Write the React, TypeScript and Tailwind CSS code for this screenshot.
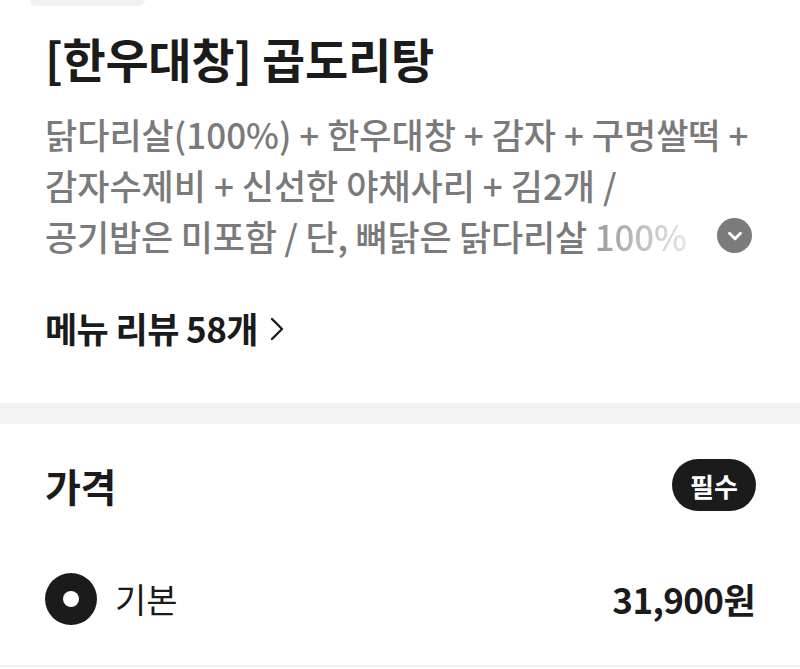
import { ChevronDown } from "lucide-react";

const FONT = "font-['Noto_Sans_CJK_KR','Noto_Sans',sans-serif]";

export default function App() {
  return (
    <div className={`w-[800px] h-[669px] overflow-hidden bg-white text-[#1b1b1b] ${FONT}`}>
      {/* top menu info */}
      <div className="px-[45px]">
        <div className="ml-[-15px] h-[6px] w-[115px] rounded-b-[10px] bg-[#f1f1f2]" />
        <h1 className="mt-[22px] h-[60px] text-[47px] font-bold leading-[60px] tracking-[-0.3px]">[한우대창] 곱도리탕</h1>
        <div className="mt-[20px] text-[35px] font-medium leading-[51px] text-[#7a7a7a]">
          <p className="whitespace-nowrap">닭다리살(100%) + 한우대창 + 감자 + 구멍쌀떡 +</p>
          <p className="whitespace-nowrap">감자수제비 + 신선한 야채사리 + 김2개 /</p>
          <div className="flex items-center">
            <p className="whitespace-nowrap tracking-[-0.2px]">
              공기밥은 미포함 / 단, 뼈닭은 닭다리살{" "}
              <span className="bg-gradient-to-r from-[#9a9a9a] to-[#e6e6e6] bg-clip-text text-transparent">100%</span>
            </p>
            <div className="ml-auto mr-[3px] flex h-[35px] w-[35px] shrink-0 items-center justify-center rounded-full bg-[#7b7b7b]">
              <ChevronDown className="h-[22px] w-[22px] text-white" strokeWidth={3.2} />
            </div>
          </div>
        </div>
        <div className="mt-[47px] flex h-[40px] items-center gap-[12px]">
          <span className="text-[35px] font-bold tracking-[-0.6px]">메뉴 리뷰 58개</span>
          <svg width="14" height="24" viewBox="0 0 14 24" fill="none" className="mt-[2px]">
            <polyline points="2,2 12,12 2,22" stroke="#1b1b1b" strokeWidth="2.4" strokeLinecap="round" strokeLinejoin="round" />
          </svg>
        </div>
      </div>

      <div className="mt-[55px] h-[21px] bg-[#f3f3f5]" />

      {/* price section */}
      <div className="px-[45px]">
        <div className="mt-[32px] flex items-center justify-between">
          <h2 className="text-[39px] font-bold tracking-[-0.5px]">가격</h2>
          <span className="mr-[-1px] flex h-[52px] w-[84px] items-center justify-center rounded-full bg-[#1b1b1b] text-[26px] font-bold text-white">
            필수
          </span>
        </div>
        <div className="mt-[58px] flex items-center">
          <div className="flex h-[52px] w-[52px] items-center justify-center rounded-full bg-[#1b1b1b]">
            <div className="h-[16px] w-[16px] rounded-full bg-white" />
          </div>
          <span className="ml-[18px] text-[34px]">기본</span>
          <span className="ml-auto text-[35px] font-bold tracking-[-0.6px]">31,900원</span>
        </div>
      </div>
      <div className="mt-[40px] h-[2px] bg-[#f0f0f2]" />
    </div>
  );
}
